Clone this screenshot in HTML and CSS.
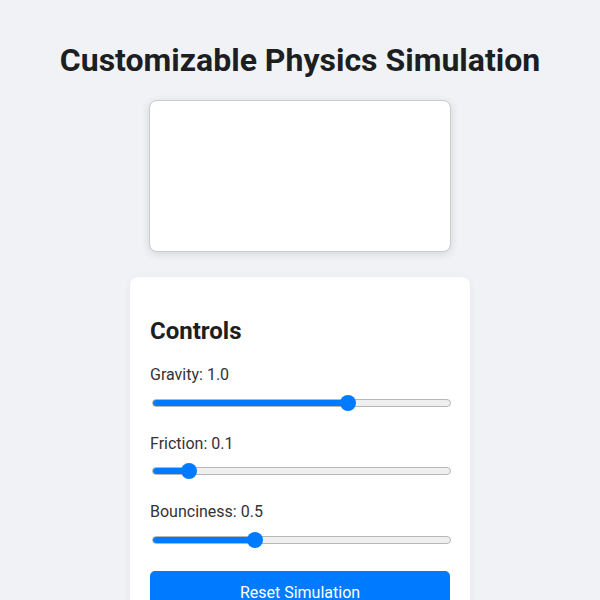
FILE: index.html
```html
<!DOCTYPE html>
<html lang="en">
<head>
<meta charset="utf-8">
<title>Customizable Physics Simulation</title>
<link rel="stylesheet" href="styles.css">
</head>
<body>
<h1 class="title">Customizable Physics Simulation</h1>
<canvas class="sim-canvas" width="300" height="150"></canvas>
<div class="controls">
  <h2 class="controls-title">Controls</h2>
  <div class="control-group">
    <label class="control-label">Gravity: 1.0</label>
    <input class="slider" type="range" min="0" max="1.5" step="0.1" value="1.0" style="--fill: 65.6%">
  </div>
  <div class="control-group">
    <label class="control-label">Friction: 0.1</label>
    <input class="slider" type="range" min="0" max="1" step="0.05" value="0.1" style="--fill: 12.1%">
  </div>
  <div class="control-group">
    <label class="control-label">Bounciness: 0.5</label>
    <input class="slider" type="range" min="0" max="1.5" step="0.1" value="0.5" style="--fill: 34.1%">
  </div>
  <button class="reset-btn">Reset Simulation</button>
</div>
</body>
</html>
```
FILE: styles.css
```css
* { box-sizing: border-box; }
body {
  margin: 0;
  padding: 20px;
  background: #f0f2f5;
  font-family: Roboto, "Liberation Sans", sans-serif;
  color: #1c1e21;
  display: flex;
  flex-direction: column;
  align-items: center;
}
.title {
  font-size: 32px;
  font-weight: 700;
  margin: 21px 0 21px;
  color: #1c1e21;
}
.sim-canvas {
  display: block;
  width: 302px;
  height: 152px;
  background: #fff;
  border: 1px solid #ccc;
  border-radius: 8px;
  box-shadow: 0 2px 8px rgba(0,0,0,0.12);
  margin-bottom: 25px;
}
.controls {
  width: 340px;
  background: #fff;
  border-radius: 8px;
  padding: 20px;
  box-shadow: 0 2px 8px rgba(0,0,0,0.06);
}
.controls-title {
  font-size: 24px;
  font-weight: 700;
  margin: 20px 0 20px;
}
.control-group {
  margin-bottom: 23px;
}
.control-label {
  display: block;
  font-size: 16px;
  color: #333;
  margin-bottom: 10.5px;
}
.slider {
  -webkit-appearance: none;
  appearance: none;
  display: block;
  width: calc(100% - 1px);
  height: 16px;
  margin: 2px 0 2px 2px;
  background: transparent;
}
.slider::-webkit-slider-runnable-track {
  height: 8px;
  border-radius: 4px;
  border: 1px solid #b8b8b8;
  background: linear-gradient(to right, #007bff var(--fill), #efefef var(--fill));
}
.slider::-webkit-slider-thumb {
  -webkit-appearance: none;
  appearance: none;
  width: 16px;
  height: 16px;
  border-radius: 50%;
  background: #007bff;
  border: none;
  margin-top: -5px;
}
.reset-btn {
  display: block;
  width: 100%;
  padding: 12px;
  font-family: Roboto, "Liberation Sans", sans-serif;
  font-size: 16px;
  color: #fff;
  background: #007bff;
  border: none;
  border-radius: 5px;
}
```
